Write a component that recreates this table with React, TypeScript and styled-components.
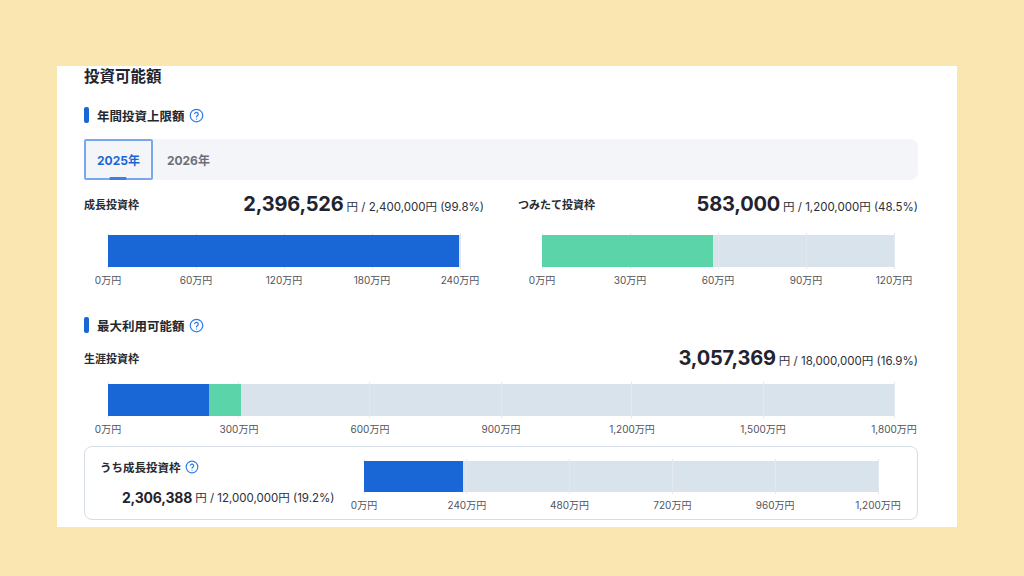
import React from "react";
import styled, { createGlobalStyle } from "styled-components";

const GlobalStyle = createGlobalStyle`
  html, body {
    margin: 0;
    padding: 0;
    background: #f9e6b0;
  }
  body {
    font-family: Inter, "Noto Sans CJK JP", "Noto Sans", sans-serif;
    color: #1f2430;
  }
  * { box-sizing: border-box; }
`;

const Page = styled.div`
  width: 1024px;
  height: 576px;
  padding: 66px 67px 49px 57px;
  background: #f9e6b0;
`;

const Panel = styled.div`
  width: 900px;
  height: 461px;
  background: #ffffff;
  padding: 1px 39px 0 27px;
  overflow: hidden;
`;

const Title = styled.h1`
  margin: 0;
  font-size: 15.5px;
  line-height: 20px;
  font-weight: 700;
  color: #1f2430;
`;

const SectionHeader = styled.div<{ $mt: number }>`
  display: flex;
  align-items: center;
  height: 20px;
  margin-top: ${(p) => p.$mt}px;
`;

const Accent = styled.span`
  width: 5px;
  height: 16px;
  border-radius: 2px;
  background: #1967d6;
  margin-right: 8px;
`;

const SectionTitle = styled.span`
  font-size: 12.5px;
  font-weight: 700;
  color: #222831;
  margin-right: 4px;
`;

const HelpIcon = ({ size = 15 }: { size?: number }) => (
  <svg width={size} height={size} viewBox="0 0 24 24" fill="none" stroke="#2f7ce6" strokeWidth={2} strokeLinecap="round" strokeLinejoin="round">
    <circle cx="12" cy="12" r="10" />
    <path d="M9.1 9a3 3 0 0 1 5.8 1c0 2-2.9 2.6-2.9 4.2" />
    <path d="M12 17.6h.01" />
  </svg>
);

const TabBar = styled.div`
  margin-top: 14px;
  height: 41px;
  background: #f4f5f9;
  border-radius: 8px;
  display: flex;
  align-items: stretch;
`;

const Tab = styled.button<{ $active?: boolean }>`
  position: relative;
  border: 2px solid ${(p) => (p.$active ? "#78a6ef" : "transparent")};
  border-radius: 2px;
  background: transparent;
  padding: 0 ${(p) => (p.$active ? 11 : 12)}px;
  font-family: inherit;
  font-size: 12px;
  font-weight: 700;
  color: ${(p) => (p.$active ? "#1b66d6" : "#6b6f78")};
  height: 41px;
`;

const TabIndicator = styled.span`
  position: absolute;
  left: 50%;
  bottom: -2px;
  width: 17px;
  height: 3px;
  transform: translateX(-50%);
  background: #3c80e4;
  border-radius: 1px;
`;

const TwoCol = styled.div`
  margin-top: 12px;
  display: grid;
  grid-template-columns: 400px 400px;
  column-gap: 34px;
`;

const RowHead = styled.div<{ $mt?: number }>`
  display: flex;
  align-items: center;
  justify-content: space-between;
  height: 24px;
  margin-top: ${(p) => p.$mt ?? 0}px;
`;

const RowLabel = styled.span`
  font-size: 11px;
  font-weight: 700;
  color: #262a33;
`;

const Value = styled.span`
  display: flex;
  align-items: baseline;
  white-space: nowrap;
`;

const BigNum = styled.span<{ $size: number }>`
  font-size: ${(p) => p.$size}px;
  font-weight: 700;
  color: #1f2430;
  letter-spacing: -0.2px;
  margin-right: 3px;
`;

const Suffix = styled.span`
  font-size: 11.5px;
  color: #2c3039;
`;

const ChartWrap = styled.div<{ $mt: number; $px: number }>`
  margin-top: ${(p) => p.$mt}px;
  padding: 0 ${(p) => p.$px}px;
`;

const Bar = styled.div<{ $h: number }>`
  position: relative;
  height: ${(p) => p.$h}px;
  background: #d9e3ec;
  display: flex;
`;

const GridLine = styled.span`
  position: absolute;
  top: -2px;
  bottom: -2px;
  width: 1px;
  margin-left: -0.5px;
  background: #e3e8ee;
  z-index: 1;
`;

const Segment = styled.span<{ $color: string }>`
  position: relative;
  z-index: 2;
  height: 100%;
  background: ${(p) => p.$color};
`;

const Axis = styled.div<{ $mt: number }>`
  position: relative;
  height: 14px;
  margin-top: ${(p) => p.$mt}px;
`;

const AxisLabel = styled.span`
  position: absolute;
  top: 0;
  transform: translateX(-50%);
  font-size: 10px;
  line-height: 14px;
  color: #50545c;
  white-space: nowrap;
`;

type Seg = { value: number; color: string };

const BLUE = "#1967d6";
const GREEN = "#5cd4a9";

const Chart = ({
  max,
  ticks,
  segments,
  mt,
  px,
  h = 32,
  axisMt = 6,
}: {
  max: number;
  ticks: string[];
  segments: Seg[];
  mt: number;
  px: number;
  h?: number;
  axisMt?: number;
}) => {
  const n = ticks.length - 1;
  return (
    <ChartWrap $mt={mt} $px={px}>
      <Bar $h={h}>
        {ticks.map((_, i) => (
          <GridLine key={i} style={{ left: `${(i / n) * 100}%` }} />
        ))}
        {segments.map((s, i) => (
          <Segment key={i} $color={s.color} style={{ width: `${(s.value / max) * 100}%` }} />
        ))}
      </Bar>
      <Axis $mt={axisMt}>
        {ticks.map((t, i) => (
          <AxisLabel key={i} style={{ left: `${(i / n) * 100}%` }}>
            {t}
          </AxisLabel>
        ))}
      </Axis>
    </ChartWrap>
  );
};

const Card = styled.div`
  margin-top: 10px;
  height: 74px;
  border: 1px solid #d6dde7;
  border-radius: 8px;
  display: flex;
  align-items: flex-start;
  padding: 0 39px 0 15px;
`;

const CardLeft = styled.div`
  width: 264px;
  flex-shrink: 0;
  padding-top: 11px;
`;

const CardLabel = styled.div`
  display: flex;
  align-items: center;
  height: 18px;
  gap: 4px;
  font-size: 11.5px;
  font-weight: 700;
  color: #262a33;
`;

const CardValue = styled.div`
  margin-top: 11px;
  padding-left: 22px;
  height: 20px;
  display: flex;
  align-items: center;
`;

const CardChart = styled.div`
  flex: 1;
  padding-top: 14px;
`;

export default function App() {
  return (
    <>
      <GlobalStyle />
      <Page>
        <Panel>
          <Title>投資可能額</Title>

          <SectionHeader $mt={18}>
            <Accent />
            <SectionTitle>年間投資上限額</SectionTitle>
            <HelpIcon />
          </SectionHeader>

          <TabBar>
            <Tab $active>
              2025年
              <TabIndicator />
            </Tab>
            <Tab>2026年</Tab>
          </TabBar>

          <TwoCol>
            <div>
              <RowHead>
                <RowLabel>成長投資枠</RowLabel>
                <Value>
                  <BigNum $size={20}>2,396,526</BigNum>
                  <Suffix>円 / 2,400,000円 (99.8%)</Suffix>
                </Value>
              </RowHead>
              <Chart
                mt={19}
                px={24}
                max={2400000}
                ticks={["0万円", "60万円", "120万円", "180万円", "240万円"]}
                segments={[{ value: 2396526, color: BLUE }]}
              />
            </div>
            <div>
              <RowHead>
                <RowLabel>つみたて投資枠</RowLabel>
                <Value>
                  <BigNum $size={20}>583,000</BigNum>
                  <Suffix>円 / 1,200,000円 (48.5%)</Suffix>
                </Value>
              </RowHead>
              <Chart
                mt={19}
                px={24}
                max={1200000}
                ticks={["0万円", "30万円", "60万円", "90万円", "120万円"]}
                segments={[{ value: 583000, color: GREEN }]}
              />
            </div>
          </TwoCol>

          <SectionHeader $mt={28}>
            <Accent />
            <SectionTitle>最大利用可能額</SectionTitle>
            <HelpIcon />
          </SectionHeader>

          <RowHead $mt={11}>
            <RowLabel>生涯投資枠</RowLabel>
            <Value>
              <BigNum $size={20}>3,057,369</BigNum>
              <Suffix>円 / 18,000,000円 (16.9%)</Suffix>
            </Value>
          </RowHead>
          <Chart
            mt={14}
            px={24}
            max={18000000}
            ticks={["0万円", "300万円", "600万円", "900万円", "1,200万円", "1,500万円", "1,800万円"]}
            segments={[
              { value: 2306388, color: BLUE },
              { value: 750981, color: GREEN },
            ]}
          />

          <Card>
            <CardLeft>
              <CardLabel>
                うち成長投資枠
                <HelpIcon size={14} />
              </CardLabel>
              <CardValue>
                <BigNum $size={14}>2,306,388</BigNum>
                <Suffix>円 / 12,000,000円 (19.2%)</Suffix>
              </CardValue>
            </CardLeft>
            <CardChart>
              <Chart
                mt={0}
                px={0}
                h={31}
                axisMt={6}
                max={12000000}
                ticks={["0万円", "240万円", "480万円", "720万円", "960万円", "1,200万円"]}
                segments={[{ value: 2306388, color: BLUE }]}
              />
            </CardChart>
          </Card>
        </Panel>
      </Page>
    </>
  );
}
